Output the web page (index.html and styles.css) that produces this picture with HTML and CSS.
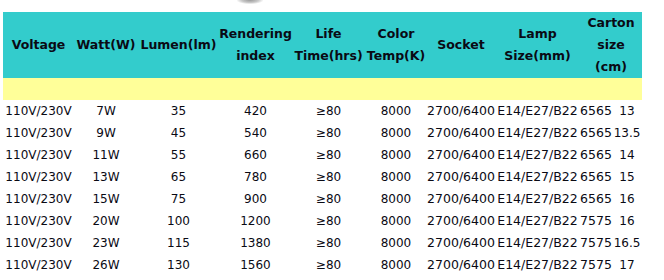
FILE: index.html
```html
<!DOCTYPE html>
<html>
<head>
<meta charset="utf-8">
<link rel="stylesheet" href="styles.css">
</head>
<body>
<div class="page">
  <div class="top"><span class="blob"></span></div>
  <table class="spec">
    <colgroup>
      <col class="c1"><col class="c2"><col class="c3"><col class="c4"><col class="c5">
      <col class="c6"><col class="c7"><col class="c8"><col class="c9"><col class="c10">
    </colgroup>
    <thead>
      <tr class="head">
        <th>Voltage</th>
        <th>Watt(W)</th>
        <th>Lumen(lm)</th>
        <th>Rendering<br>index</th>
        <th>Life<br>Time(hrs)</th>
        <th>Color<br>Temp(K)</th>
        <th>Socket</th>
        <th>Lamp<br>Size(mm)</th>
        <th colspan="2">Carton<br>size<br>(cm)</th>
      </tr>
      <tr class="band"><td colspan="10"></td></tr>
    </thead>
    <tbody>
      <tr><td>110V/230V</td><td>7W</td><td>35</td><td>420</td><td>≥80</td><td>8000</td><td class="wide">2700/6400</td><td class="wide">E14/E27/B22</td><td class="wide">6565</td><td>13</td></tr>
      <tr><td>110V/230V</td><td>9W</td><td>45</td><td>540</td><td>≥80</td><td>8000</td><td class="wide">2700/6400</td><td class="wide">E14/E27/B22</td><td class="wide">6565</td><td>13.5</td></tr>
      <tr><td>110V/230V</td><td>11W</td><td>55</td><td>660</td><td>≥80</td><td>8000</td><td class="wide">2700/6400</td><td class="wide">E14/E27/B22</td><td class="wide">6565</td><td>14</td></tr>
      <tr><td>110V/230V</td><td>13W</td><td>65</td><td>780</td><td>≥80</td><td>8000</td><td class="wide">2700/6400</td><td class="wide">E14/E27/B22</td><td class="wide">6565</td><td>15</td></tr>
      <tr><td>110V/230V</td><td>15W</td><td>75</td><td>900</td><td>≥80</td><td>8000</td><td class="wide">2700/6400</td><td class="wide">E14/E27/B22</td><td class="wide">6565</td><td>16</td></tr>
      <tr><td>110V/230V</td><td>20W</td><td>100</td><td>1200</td><td>≥80</td><td>8000</td><td class="wide">2700/6400</td><td class="wide">E14/E27/B22</td><td class="wide">7575</td><td>16</td></tr>
      <tr><td>110V/230V</td><td>23W</td><td>115</td><td>1380</td><td>≥80</td><td>8000</td><td class="wide">2700/6400</td><td class="wide">E14/E27/B22</td><td class="wide">7575</td><td>16.5</td></tr>
      <tr><td>110V/230V</td><td>26W</td><td>130</td><td>1560</td><td>≥80</td><td>8000</td><td class="wide">2700/6400</td><td class="wide">E14/E27/B22</td><td class="wide">7575</td><td>17</td></tr>
    </tbody>
  </table>
</div>
</body>
</html>
```
FILE: styles.css
```css
html, body {
  margin: 0;
  padding: 0;
  background: #ffffff;
}

.page {
  padding: 0 0 0 3px;
  font-family: "DejaVu Sans", Verdana, sans-serif;
  color: #000;
}

.top {
  height: 12px;
}

.blob {
  display: block;
  width: 26px;
  height: 4px;
  margin-left: 234px;
  background: radial-gradient(ellipse at 50% 0%, #9a9a9a 0%, #c8c8c8 45%, rgba(255,255,255,0) 75%);
}

.spec {
  border-collapse: collapse;
  border-spacing: 0;
  table-layout: fixed;
  width: 639px;
}

.c1 { width: 71px; }
.c2 { width: 64px; }
.c3 { width: 81px; }
.c4 { width: 73px; }
.c5 { width: 73px; }
.c6 { width: 62px; }
.c7 { width: 68px; }
.c8 { width: 85px; }
.c9 { width: 32px; }
.c10 { width: 30px; }

.spec th,
.spec td {
  padding: 0;
  text-align: center;
  vertical-align: middle;
  white-space: nowrap;
  overflow: visible;
}

.head th {
  background: #33cccc;
  height: 66px;
  font-size: 12.5px;
  font-weight: bold;
  line-height: 22px;
  color: #0a0a14;
}

.band td {
  background: #ffff99;
  height: 22px;
}

.spec tbody td {
  height: 22px;
  font-size: 12px;
  line-height: 22px;
  color: #0a0a14;
}

.spec tbody td.wide {
  font-size: 12.5px;
}
```
